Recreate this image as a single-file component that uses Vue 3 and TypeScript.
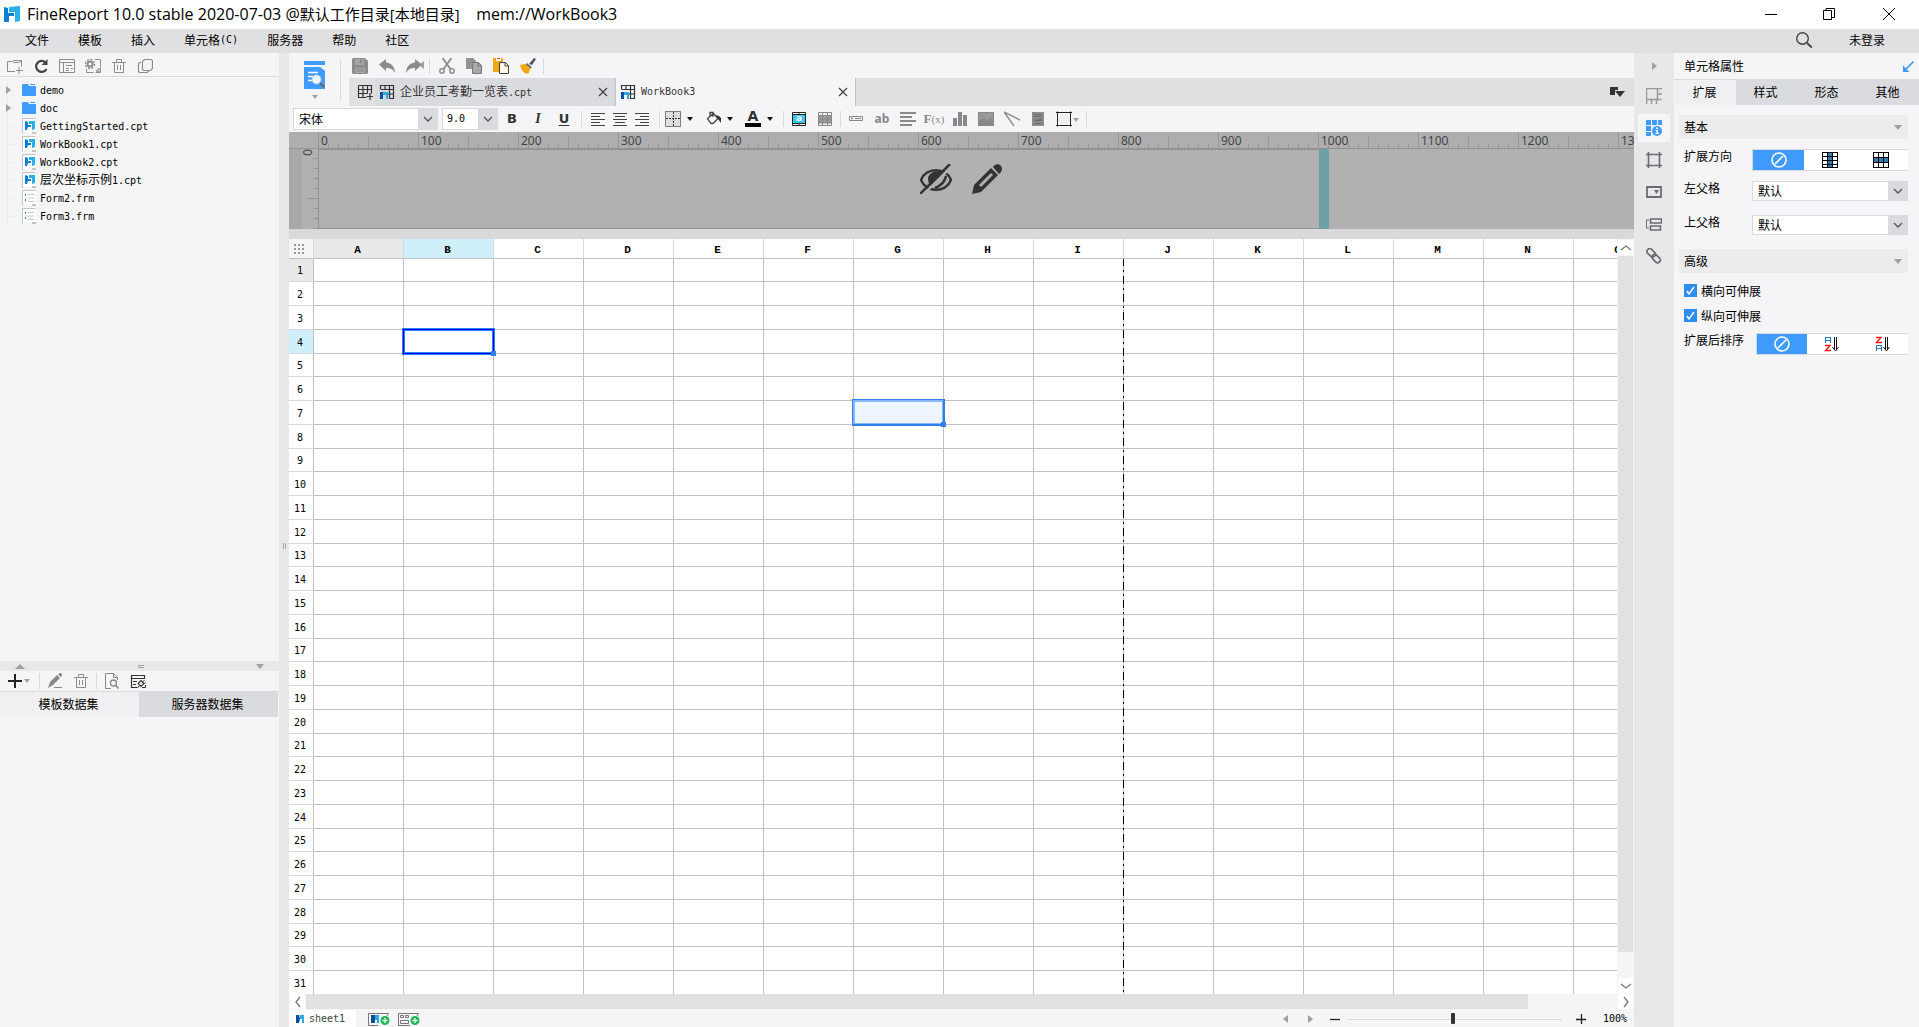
<script setup lang="ts">
import { ref } from 'vue'

const icons: Record<string, string> = {
  logo: '<path d="M0 1l4 1v5h6v3H5v6H0z" fill="#0a7fd6"/><path d="M5 1l11-1v15l-5 1V6H5z" fill="#27b1ea"/>',
  newFolder: '<path d="M8 13.500H.5v-10h5l1 1h6l2-2v6M6 2.500h8.500M12 9v7M9 12.500h7" fill="none" stroke="#8d8d8d"/>',
  refresh: '<path d="M12.500 4.500A5.500 5.500 0 1 0 13.500 11" fill="none" stroke="#444" stroke-width="2.200"/><path d="M14.500 1v6H8.500z" fill="#444"/>',
  tree: '<path d="M.5 1.500h15v13H.5zM.5 4.500h15M4.500 4.500v10M7 7.500h6M7 10.500h3M12 10.500h2M7 12.500h3" fill="none" stroke="#8d8d8d"/>',
  gearDoc: '<circle cx="5" cy="6" r="2.500" fill="none" stroke="#8d8d8d" stroke-width="2"/><circle cx="5" cy="6" r="4.500" fill="none" stroke="#8d8d8d" stroke-width="1.500" stroke-dasharray="2 1.500"/><path d="M1.500 11v3.500h7M10 1.500h5.500V9M11 13l3-3v4zM10.500 14.500h5v-5" fill="none" stroke="#8d8d8d"/>',
  trash: '<path d="M1 4.500h14M5.500 4V1.500h5V4M3.500 5v9.500h9V5M6.500 7v5M9.500 7v5" fill="none" stroke="#8d8d8d"/>',
  copy: '<path d="M7.500 1.500h7l1 1v8l-2 2h-7l-1-1v-8zM4 4.500H2.500l-1 1v8l1 1h8l1-1V13" fill="none" stroke="#8d8d8d" stroke-width="1.200"/>',
  save: '<path d="M0 1l1-1h12l3 3v12l-1 1H1l-1-1z" fill="#8c8c8c"/><path d="M3 1h9v6H3zM3 10h10v5H3z" fill="#a6a6a6"/><path d="M8 2h2v3H8zM4 11.500h8M4 13.500h8" stroke="#8c8c8c" fill="#8c8c8c"/>',
  undo: '<path d="M0 6.500L7 1v3.500c5 .5 9 4 9 10.500-2-4-5-5-9-5V13z" fill="#8c8c8c"/>',
  redo: '<path d="M16 6.500L9 1v3.500C4 5 0 8.500 0 15c2-4 5-5 9-5V13z" fill="#8c8c8c"/>',
  cut: '<path d="M3.500 0l8 11M12.500 0l-8 11" stroke="#8c8c8c" stroke-width="1.800"/><circle cx="3" cy="13" r="2.200" fill="none" stroke="#8c8c8c" stroke-width="1.500"/><circle cx="13" cy="13" r="2.200" fill="none" stroke="#8c8c8c" stroke-width="1.500"/>',
  copyFill: '<path d="M0 0h7l3 3v8H0z" fill="#939393"/><path d="M6.500 4.500h6l3 3v8h-9z" fill="#a8a8a8" stroke="#777"/><path d="M12 4.500V8h3.500" fill="none" stroke="#777"/>',
  paste: '<path d="M0 0h10v4H6v10H0z" fill="#f2a90f"/><path d="M3 0h5v3H3z" fill="#fff"/><path d="M4 0h3v1H4z" fill="#d4501e"/><path d="M6.500 4.500h6l3 3v8h-9z" fill="#fff8e6" stroke="#444"/><path d="M12 4.500V8h3.500" fill="none" stroke="#444"/>',
  brush: '<path d="M9 6l5-6 2 1-4 6z" fill="#4b5563"/><path d="M7 5l5 4-2 2-5-4z" fill="#777"/><path d="M0 7l5-1 5 4-1 5-2 1C3 15 1 11 0 7z" fill="#f2a90f"/>',
  alignLeft: '<path d="M1 2.500h14M1 5.500h9M1 8.500h14M1 11.500h9M1 14.500h14" stroke="#444"/>',
  alignCenter: '<path d="M1 2.500h14M3 5.500h10M1 8.500h14M3 11.500h10M1 14.500h14" stroke="#444"/>',
  alignRight: '<path d="M1 2.500h14M6 5.500h9M1 8.500h14M6 11.500h9M1 14.500h14" stroke="#444"/>',
  border: '<path d="M.5.5h15v15H.5z" fill="#dedede" stroke="#111" stroke-dasharray="1 1"/><path d="M8.500 1v14M1 7.500h14" stroke="#333" stroke-dasharray="2 1"/>',
  bucket: '<path d="M0 12h16v4H0z" fill="#fff"/><path d="M2.500 7.500l6-5 4.500 5-5 5h-2zM5 5V1.500h3V6" fill="none" stroke="#444" stroke-width="1.300"/><path d="M10 4l4 1 2 2v5l-3-4z" fill="#333"/>',
  fontColor: '<path d="M0 12h16v4H0z" fill="#000"/>',
  cellText: '<path d="M1 1h14v14H1z" fill="#3cc3fa"/><path d="M1 1h14v2H1zM1 13h14v2H1z" fill="#fff"/><path d="M1.500 1.500h13v13h-13zM1.500 3.500h13M1.500 12.500h13M8 1v3M8 12v3" fill="none" stroke="#222"/>',
  cellGrid: '<path d="M1 4h14v8H1z" fill="#999"/><path d="M1.500 1.500h13v13h-13zM1.500 4.500h13M1.500 8h13M1.500 12h13M5.500 1v14M10.500 1v14" fill="none" stroke="#888"/>',
  field: '<path d="M1.500 5.500h13v4h-13zM3.500 7h1v1h-1zM7 7.500h6" fill="none" stroke="#888"/>',
  lines: '<path d="M0 2h16M0 6h12M0 10h16M0 14h12" stroke="#888" stroke-width="2"/>',
  chart: '<path d="M1 7h4v8H1zM6 1h4v14H6zM11 4h4v11h-4z" fill="#888"/>',
  image: '<path d="M0 1h16v14H0z" fill="#888"/><path d="M1 2h14v7l-3-2-3 3-3-3-5 3z" fill="#999"/>',
  slash: '<path d="M0 1l16 8M0 1l10 14" stroke="#8c8c8c" stroke-width="1.400"/>',
  subreport: '<path d="M2 1h12v14H2z" fill="#8c8c8c"/><path d="M4 3.500h8M4 5.500h8M4 12.500h8" stroke="#6c6c6c"/><path d="M4 10l2-2 2 1 3-2 1 3z" fill="#6c6c6c"/>',
  frame: '<path d="M1.500.5v15M14.500.5v15M0 1.500h16M0 14.500h16" fill="none" stroke="#222"/><path d="M3 3h10v10H3z" fill="#efefef"/>',
  tabNew: '<path d="M1.500 1.500h13v8M1.500 1.500v12h8M1.500 5.500h13M6 1.500v12M10.500 1.500v8M1.500 9.500h9M13 9v7M9.500 12.500H16" fill="none" stroke="#333" stroke-width="1.200"/>',
  tabFile: '<path d="M1.500 5V1.500h13v13H10M1.500 5.500h13M6 1.500v4M10.500 1.500v13M9 10h5" fill="none" stroke="#333" stroke-width="1.200"/><path d="M1 8h3v7H1z" fill="#0a4f9e"/><path d="M4 8h5v7H7v-4H4z" fill="#29abe2"/>',
  close: '<path d="M4 4l8 8M12 4l-8 8" stroke="#444" stroke-width="1.300"/>',
  down: '<path d="M4 6l4 4 4-4" fill="none" stroke="#555" stroke-width="1.300"/>',
  left: '<path d="M10 3L6 8l4 5" fill="none" stroke="#777" stroke-width="1.300"/>',
  right: '<path d="M6 3l4 5-4 5" fill="none" stroke="#777" stroke-width="1.300"/>',
  up: '<path d="M3 10l5-4 5 4" fill="none" stroke="#777" stroke-width="1.300"/>',
  downWide: '<path d="M3 6l5 4 5-4" fill="none" stroke="#777" stroke-width="1.300"/>',
  tabList: '<path d="M1 3h8v3H6v5H1z" fill="#333"/><path d="M6 7h10l-5 6z" fill="#333"/>',
  stripTemplate: '<path d="M.5 16V.5H16M.5 11.500h15M11.500 0v11M11.500 6h4.500M5.500 11.500V16M10.500 11.500V16" fill="none" stroke="#999" stroke-width="1.500"/>',
  stripCell: '<path d="M0 0h5v5H0zM6 0h5v5H6zM12 0h4v5h-4zM0 6h5v5H0zM0 12h5v4H0z" fill="#409bff"/><circle cx="11" cy="11" r="5.500" fill="#f5f5f7"/><circle cx="11" cy="11" r="5" fill="#409bff"/><path d="M10 7.500h2v1.500h-2zM9.500 10h2.500v3h1v1H9.500v-1h1v-2h-1z" fill="#fff"/>',
  stripFrame: '<path d="M2.500 0v16M13.500 0v16M0 2.500h16M0 13.500h16" stroke="#6b6b75" stroke-width="1.600"/>',
  stripWidget: '<path d="M1 3h14v10H1z" fill="none" stroke="#6b6b75" stroke-width="1.800"/><path d="M8 6h5l-2.500 4z" fill="#6b6b75"/>',
  stripCondition: '<path d="M4.500 3h11v4h-11zM4.500 10h10v4h-10z" fill="none" stroke="#6b6b75" stroke-width="1.600"/><path d="M3 4H.5v8H3" fill="none" stroke="#6b6b75"/>',
  stripLink: '<g transform="rotate(45 8 8)" fill="none" stroke="#6b6b75" stroke-width="1.700"><rect x="-1" y="5" width="9.500" height="5.500" rx="2.700"/><rect x="6.500" y="5.500" width="9.500" height="5.500" rx="2.700"/></g>',
  none: '<circle cx="8" cy="8" r="7" fill="none" stroke="#fff" stroke-width="1.600"/><path d="M4 12l8-8" stroke="#fff" stroke-width="1.600"/>',
  expandV: '<path d="M0 0h16v16H0z" fill="#000"/><path d="M1 1h4v3H1zM1 5h4v3H1zM1 9h4v3H1zM1 13h4v2H1zM11 1h4v3h-4zM11 5h4v3h-4zM11 9h4v3h-4zM11 13h4v2h-4z" fill="#fff"/><path d="M6 1h4v3H6zM6 5h4v3H6zM6 9h4v3H6zM6 13h4v2H6z" fill="#2f7cb0"/>',
  expandH: '<path d="M0 0h16v16H0z" fill="#000"/><path d="M1 1h4v4H1zM6 1h4v4H6zM11 1h4v4h-4zM1 11h4v4H1zM6 11h4v4H6zM11 11h4v4h-4z" fill="#fff"/><path d="M1 6h4v4H1zM6 6h4v4H6zM11 6h4v4h-4z" fill="#2f7cb0"/>',
  sortAsc: '<path d="M1.500 7V1.500h5V7M1.500 4.500h5" fill="none" stroke="#2f7cb0" stroke-width="1.200"/><path d="M1 9.500h5L1.500 14.500h5.500" fill="none" stroke="#f01414" stroke-width="1.300"/><path d="M10.500 1v12M12.500 1v12M8.500 11l3 4 3-4" fill="none" stroke="#111"/>',
  sortDesc: '<path d="M1.500 15V9.500h5V15M1.500 12.500h5" fill="none" stroke="#2f7cb0" stroke-width="1.200"/><path d="M1 1.500h5L1.500 6.500h5.500" fill="none" stroke="#f01414" stroke-width="1.300"/><path d="M10.500 1v12M12.500 1v12M8.500 11l3 4 3-4" fill="none" stroke="#111"/>',
  plus: '<path d="M8 1v14M1 8h14" stroke="#222" stroke-width="2"/>',
  pencil: '<path d="M1 15l2-6 7-7 3 3-7 7z" fill="#888"/><path d="M7 14.500h8" stroke="#888"/><path d="M11 1l3-1 1 2-1 2z" fill="#777"/>',
  previewData: '<path d="M7 15.500H1.500V.5h8l4 4V7M9.500.5v4h4" fill="none" stroke="#888"/><circle cx="9.500" cy="10" r="3" fill="none" stroke="#888" stroke-width="1.300"/><path d="M11.500 12l3 3.500" stroke="#888" stroke-width="1.500"/>',
  dataConn: '<path d="M7 14.500H1.500v-12h13V6M1 5.500h14M3 8.500h4M3 11.500h3" fill="none" stroke="#333" stroke-width="1.200"/><rect x="9" y="8.500" width="4" height="4" transform="rotate(45 11 10.500)" fill="none" stroke="#333" stroke-width="1.200"/><path d="M12.500 9l2-2M14 11l1.500-1.500M7.500 15l2-2.500M12 14.500h3.500V12" fill="none" stroke="#333"/>',
  addSheet: '<path d="M10 13.500H.5v-12h20" fill="none" stroke="#777"/><path d="M20.500 1.500L19 4" stroke="#777"/><path d="M3 3h4v8H3z" fill="#0a4f9e"/><path d="M7 3h4v8H9V8H7z" fill="#29abe2"/><circle cx="17" cy="8.500" r="4.500" fill="#19b955"/><path d="M17 6v5M14.500 8.500h5" stroke="#fff" stroke-width="1.300"/>',
  addForm: '<path d="M12 13.500H.5v-12h20" fill="none" stroke="#777"/><path d="M20.500 1.500L19 4" stroke="#777"/><path d="M2.500 3.500h3v2h-3zM7.500 3.500h3v2h-3zM2.500 8.500h8v3h-8z" fill="none" stroke="#777"/><circle cx="17" cy="8.500" r="4.500" fill="#19b955"/><path d="M17 6v5M14.500 8.500h5" stroke="#fff" stroke-width="1.300"/>',
}

interface TreeNode { kind: 'folder' | 'cpt' | 'frm'; cjk?: string; name: string }
const tree: TreeNode[] = [
  { kind: 'folder', name: 'demo' },
  { kind: 'folder', name: 'doc' },
  { kind: 'cpt', name: 'GettingStarted.cpt' },
  { kind: 'cpt', name: 'WorkBook1.cpt' },
  { kind: 'cpt', name: 'WorkBook2.cpt' },
  { kind: 'cpt', cjk: '层次坐标示例', name: '1.cpt' },
  { kind: 'frm', name: 'Form2.frm' },
  { kind: 'frm', name: 'Form3.frm' },
]
const menus = [
  { label: '文件' }, { label: '模板' }, { label: '插入' }, { label: '单元格', key: '(C)' },
  { label: '服务器' }, { label: '帮助' }, { label: '社区' },
]
const treeTools = ['newFolder', 'refresh', 'tree', 'gearDoc', 'trash', 'copy']
const historyTools = ['save', 'undo', 'redo']
const clipTools = ['cut', 'copyFill', 'paste', 'brush']
const strip = ['stripTemplate', 'stripCell', 'stripFrame', 'stripWidget', 'stripCondition', 'stripLink']
const panelTabs = ['扩展', '样式', '形态', '其他']
const columns = 'ABCDEFGHIJKLMNO'.split('')
const rows = Array.from({ length: 31 }, (_, i) => i + 1)
const ruler = Array.from({ length: 14 }, (_, i) => i * 100)
const zoom = ref(49)
const horizontal = ref(true)
const vertical = ref(true)
</script>

<template>
  <div class="app">
    <header class="title">
      <svg class="i" viewBox="0 0 16 16" v-html="icons.logo" />
      <h1>FineReport 10.0 stable 2020-07-03 @<span>默认工作目录[本地目录]</span>&nbsp;&nbsp;&nbsp; mem://WorkBook3</h1>
      <div class="window-buttons">
        <button aria-label="minimize"><svg viewBox="0 0 12 12"><path d="M0 6.500h12" stroke="#000" /></svg></button>
        <button aria-label="restore"><svg viewBox="0 0 12 12"><path d="M.5 2.500h8v9h-8zM3 2V.5h8.500v9H9" fill="none" stroke="#000" /></svg></button>
        <button aria-label="close"><svg viewBox="0 0 12 12"><path d="M0 0l12 12M12 0L0 12" stroke="#000" /></svg></button>
      </div>
    </header>
    <nav class="menu">
      <button v-for="m in menus" :key="m.label">{{ m.label }}<span v-if="m.key" class="mono">{{ m.key }}</span></button>
      <div class="account">
        <svg class="i" viewBox="0 0 16 16"><circle cx="6.500" cy="6.500" r="5.800" fill="none" stroke="#444" stroke-width="1.400" /><path d="M11 11l5 4.500" stroke="#444" stroke-width="2" /></svg>
        <button>未登录</button>
      </div>
    </nav>

    <div class="body">
      <aside class="left">
        <div class="tree-tools">
          <button v-for="t in treeTools" :key="t" class="tool" :aria-label="t"><svg class="i" viewBox="0 0 16 16" v-html="icons[t]" /></button>
        </div>
        <ul class="tree">
          <li v-for="n in tree" :key="n.name">
            <span class="twig"><i v-if="n.kind === 'folder'" class="tri right" /></span>
            <svg v-if="n.kind === 'folder'" class="i" viewBox="0 0 16 16"><path d="M1 3l1-1h5l1 2h7v10H1z" fill="#409bff" /><path d="M9 2.500h5" stroke="#409bff" /></svg>
            <svg v-else class="i" viewBox="0 0 16 16">
              <path d="M2 1h13v14H2z" fill="#fff" /><path d="M1.500 16V.5h13" fill="none" stroke="#c4c4c4" /><path d="M11 14h4v2h-4z" fill="#c4c4c4" />
              <template v-if="n.kind === 'cpt'"><path d="M4 3l3 1v3h3v2H7l-1 3H4z" fill="#0a7fd6" /><path d="M8 3h6v8l-3 1V6H8z" fill="#27b1ea" /></template>
              <template v-else><path d="M4.500 4v2M4.500 9v2" stroke="#2f8bd0" /><path d="M6.500 4.500h7M6.500 11.500h7M6.500 8h7" fill="none" stroke="#c8c8c8" /></template>
            </svg>
            <span>{{ n.cjk }}<span class="mono">{{ n.name }}</span></span>
          </li>
        </ul>
        <div class="hsplit"><i class="tri up" /><i class="grip" /><i class="tri down big" /></div>
        <div class="data-tools">
          <button class="tool add" aria-label="add"><svg class="i" viewBox="0 0 16 16" v-html="icons.plus" /><i class="tri down" /></button>
          <i class="sep" />
          <button class="tool" aria-label="edit"><svg class="i" viewBox="0 0 16 16" v-html="icons.pencil" /></button>
          <button class="tool" aria-label="delete"><svg class="i" viewBox="0 0 16 16" v-html="icons.trash" /></button>
          <i class="sep" />
          <button class="tool" aria-label="preview data"><svg class="i" viewBox="0 0 16 16" v-html="icons.previewData" /></button>
          <button class="tool" aria-label="connection"><svg class="i" viewBox="0 0 16 16" v-html="icons.dataConn" /></button>
        </div>
        <div class="data-tabs"><button class="on">模板数据集</button><button>服务器数据集</button></div>
        <div class="data-list" />
      </aside>
      <div class="vsplit"><i class="tri left" /><i class="vgrip" /></div>

      <main class="center">
        <div class="top">
          <button class="preview" aria-label="preview">
            <svg viewBox="0 0 22 28"><path d="M0 0h21v4H0zM0 6h16l5 4v18H0z" fill="#409bff" /><path d="M4 11.500h10M4 15.500h5M4 19.500h4" stroke="#fff" stroke-width="1.500" /><circle cx="12.500" cy="18.500" r="4.500" fill="#eef5fb" stroke="#bcd" /><path d="M16 22l4 4" stroke="#666" stroke-width="2" /></svg>
            <i class="tri down" />
          </button>
          <i class="sep tall" />
          <div class="top-right">
            <div class="history">
              <button v-for="t in historyTools" :key="t" class="tool" :aria-label="t"><svg class="i" viewBox="0 0 16 16" v-html="icons[t]" /></button>
              <i class="sep" />
              <button v-for="t in clipTools" :key="t" class="tool" :aria-label="t"><svg class="i" viewBox="0 0 16 16" v-html="icons[t]" /></button>
              <i class="sep" />
            </div>
            <div class="tabs">
              <button class="new-tab" aria-label="new"><svg class="i" viewBox="0 0 16 16" v-html="icons.tabNew" /></button>
              <div class="tab">
                <svg class="i" viewBox="0 0 16 16" v-html="icons.tabFile" />
                <span>企业员工考勤一览表<span class="mono">.cpt</span></span>
                <button aria-label="close tab"><svg class="i" viewBox="0 0 16 16" v-html="icons.close" /></button>
              </div>
              <div class="tab on">
                <svg class="i" viewBox="0 0 16 16" v-html="icons.tabFile" />
                <span class="mono">WorkBook3</span>
                <button aria-label="close tab"><svg class="i" viewBox="0 0 16 16" v-html="icons.close" /></button>
              </div>
              <button class="tab-list" aria-label="tab list"><svg class="i" viewBox="0 0 16 16" v-html="icons.tabList" /></button>
            </div>
          </div>
        </div>

        <div class="format">
          <div class="combo font"><select aria-label="font"><option>宋体</option></select><span><svg class="i" viewBox="0 0 16 16" v-html="icons.down" /></span></div>
          <div class="combo size"><select aria-label="size" class="mono"><option>9.0</option></select><span><svg class="i" viewBox="0 0 16 16" v-html="icons.down" /></span></div>
          <div class="group style">
            <button class="tool b">B</button><button class="tool it">I</button><button class="tool u">U</button>
          </div>
          <i class="sep" />
          <div class="group align">
            <button v-for="a in ['alignLeft', 'alignCenter', 'alignRight']" :key="a" class="tool" :aria-label="a"><svg class="i" viewBox="0 0 16 16" v-html="icons[a]" /></button>
          </div>
          <i class="sep" />
          <div class="group drops">
            <button aria-label="border"><svg class="i" viewBox="0 0 16 16" v-html="icons.border" /><i class="tri down dark" /></button>
            <button aria-label="fill"><svg class="i" viewBox="0 0 16 16" v-html="icons.bucket" /><i class="tri down dark" /></button>
            <button aria-label="text colour"><span class="fc"><svg class="i" viewBox="0 0 16 16" v-html="icons.fontColor" /><b>A</b></span><i class="tri down dark" /></button>
          </div>
          <i class="sep" />
          <div class="group cells">
            <button class="tool cell-a" aria-label="merge"><svg class="i" viewBox="0 0 16 16" v-html="icons.cellText" /><b>a</b></button>
            <button class="tool" aria-label="unmerge"><svg class="i" viewBox="0 0 16 16" v-html="icons.cellGrid" /></button>
          </div>
          <i class="sep" />
          <div class="group cells">
            <button class="tool" aria-label="field"><svg class="i" viewBox="0 0 16 16" v-html="icons.field" /></button>
            <button class="tool ab">ab</button>
            <button class="tool" aria-label="rich text"><svg class="i" viewBox="0 0 16 16" v-html="icons.lines" /></button>
            <button class="tool fx">F<small>(x)</small></button>
            <button v-for="t in ['chart', 'image', 'slash', 'subreport']" :key="t" class="tool" :aria-label="t"><svg class="i" viewBox="0 0 16 16" v-html="icons[t]" /></button>
            <button class="tool frame" aria-label="frame"><svg class="i" viewBox="0 0 16 16" v-html="icons.frame" /><i class="tri down" /></button>
          </div>
          <i class="sep last" />
        </div>

        <div class="ruler"><div v-for="n in ruler" :key="n" class="mark">{{ n }}</div></div>
        <div class="pane">
          <div class="vruler"><span>0</span></div>
          <div class="page" />
          <div class="page-edge" />
          <div class="pane-icons">
            <svg viewBox="0 0 32 30"><path d="M1 16C6 3 26 3 31 16 26 29 6 29 1 16z" fill="none" stroke="#333" stroke-width="2.500" /><path d="M8 14c2-8 14-8 17-4L12 23c-3-2-4-5-4-9z" fill="#333" /><path d="M26 12c-1 6-6 10-11 12" fill="none" stroke="#333" stroke-width="2.500" /><path d="M3 31L32 2" stroke="#b1b1b1" stroke-width="2.500" /><path d="M0 30L30 0" stroke="#333" stroke-width="2.500" /></svg>
            <svg viewBox="0 0 30 30"><path d="M0 30l2-9L19 4l7 7L9 28z" fill="#333" /><path d="M7 21L19 9l2 2L9 23z" fill="#b1b1b1" /><path d="M21 3c2-4 9-4 9 2 0 2-1 3-3 5z" fill="#333" /></svg>
          </div>
        </div>

        <div class="sheet">
          <div class="sheet-view">
            <table>
              <colgroup><col class="c-head"><col v-for="c in columns" :key="c"></colgroup>
              <thead>
                <tr>
                  <th class="corner"><svg viewBox="0 0 12 12"><path d="M0 1h2M4 1h2M8 1h2M0 5h2M4 5h2M8 5h2M0 9h2M4 9h2M8 9h2" stroke="#999" stroke-width="2" /></svg></th>
                  <th v-for="c in columns" :key="c" :class="{ edge: c === 'A', picked: c === 'B' }">{{ c }}</th>
                </tr>
              </thead>
              <tbody>
                <tr v-for="r in rows" :key="r">
                  <th :class="{ edge: r === 1, picked: r === 4 }">{{ r }}</th>
                  <td v-for="c in columns" :key="c">
                    <div v-if="r === 4 && c === 'B'" class="sel active"><i /></div>
                    <div v-if="r === 7 && c === 'G'" class="sel hover"><i /></div>
                    <div v-if="c === 'I' && r === 1" class="page-break" />
                  </td>
                </tr>
              </tbody>
            </table>
          </div>
          <div class="vbar">
            <button aria-label="scroll up"><svg class="i" viewBox="0 0 16 16" v-html="icons.up" /></button>
            <div class="vthumb" />
            <button aria-label="scroll down"><svg class="i" viewBox="0 0 16 16" v-html="icons.downWide" /></button>
          </div>
        </div>
        <div class="hbar">
          <button aria-label="scroll left"><svg class="i" viewBox="0 0 16 16" v-html="icons.left" /></button>
          <div class="hthumb" />
          <button aria-label="scroll right"><svg class="i" viewBox="0 0 16 16" v-html="icons.right" /></button>
        </div>
        <footer>
          <button class="sheet-tab"><svg viewBox="0 0 8 8"><path d="M0 0h3l1 4-1 4H0z" fill="#0a4f9e" /><path d="M4 0h4v8H6V4H4z" fill="#29abe2" /></svg><span class="mono">sheet1</span></button>
          <button class="add-sheet" aria-label="add sheet"><svg viewBox="0 0 22 14" v-html="icons.addSheet" /></button>
          <button class="add-sheet" aria-label="add form"><svg viewBox="0 0 22 14" v-html="icons.addForm" /></button>
          <div class="zoom">
            <i class="tri left" /><i class="tri right" />
            <button aria-label="zoom out"><svg viewBox="0 0 10 10"><path d="M0 5.500h10" stroke="#222" stroke-width="1.300" /></svg></button>
            <input v-model="zoom" type="range" min="0" max="100" aria-label="zoom">
            <button aria-label="zoom in"><svg viewBox="0 0 10 10"><path d="M0 5.500h10M5.500 0v10" stroke="#222" stroke-width="1.300" /></svg></button>
            <span class="mono">100%</span>
          </div>
        </footer>
      </main>

      <nav class="strip">
        <div class="strip-top"><i class="tri right" /></div>
        <button v-for="s in strip" :key="s" :class="{ on: s === 'stripCell' }" :aria-label="s"><svg class="i" viewBox="0 0 16 16" v-html="icons[s]" /></button>
      </nav>

      <aside class="props">
        <div class="props-title"><h2>单元格属性</h2><svg viewBox="0 0 12 12"><path d="M11.500.5L3 9" stroke="#409bff" stroke-width="1.800" /><path d="M0 5v7h7z" fill="#409bff" /></svg></div>
        <div class="props-tabs"><button v-for="(t, i) in panelTabs" :key="t" :class="{ on: i === 0 }">{{ t }}</button></div>
        <section>
          <h3>基本<i class="tri down big" /></h3>
          <div class="row"><span>扩展方向</span>
            <div class="seg">
              <button class="on" aria-label="none"><svg class="i" viewBox="0 0 16 16" v-html="icons.none" /></button>
              <button aria-label="vertical"><svg class="i" viewBox="0 0 16 16" v-html="icons.expandV" /></button>
              <button aria-label="horizontal"><svg class="i" viewBox="0 0 16 16" v-html="icons.expandH" /></button>
            </div>
          </div>
          <div class="row parent"><label for="left-parent">左父格</label>
            <div class="combo"><select id="left-parent"><option>默认</option></select><span><svg class="i" viewBox="0 0 16 16" v-html="icons.down" /></span></div>
          </div>
          <div class="row parent"><label for="up-parent">上父格</label>
            <div class="combo"><select id="up-parent"><option>默认</option></select><span><svg class="i" viewBox="0 0 16 16" v-html="icons.down" /></span></div>
          </div>
        </section>
        <section>
          <h3>高级<i class="tri down big" /></h3>
          <label class="check"><input v-model="horizontal" type="checkbox"><svg viewBox="0 0 13 13"><path d="M3 7l2 3 5-7" fill="none" stroke="#fff" stroke-width="1.500" /></svg>横向可伸展</label>
          <label class="check"><input v-model="vertical" type="checkbox"><svg viewBox="0 0 13 13"><path d="M3 7l2 3 5-7" fill="none" stroke="#fff" stroke-width="1.500" /></svg>纵向可伸展</label>
          <div class="row sort"><span>扩展后排序</span>
            <div class="seg">
              <button class="on" aria-label="none"><svg class="i" viewBox="0 0 16 16" v-html="icons.none" /></button>
              <button aria-label="ascending"><svg class="i" viewBox="0 0 16 16" v-html="icons.sortAsc" /></button>
              <button aria-label="descending"><svg class="i" viewBox="0 0 16 16" v-html="icons.sortDesc" /></button>
            </div>
          </div>
        </section>
      </aside>
    </div>
  </div>
</template>

<style>
body { margin: 0; }
</style>

<style scoped>
.app { display: flex; flex-direction: column; height: 100vh; overflow: hidden; background: #f5f5f7; color: #000; font: 12px/16px "Noto Sans CJK SC", sans-serif; }
.app * { box-sizing: border-box; }
button { display: flex; align-items: center; justify-content: center; padding: 0; border: 0; background: none; color: inherit; font: inherit; white-space: nowrap; }
svg { display: block; flex: none; }
h1, h2, h3, ul { margin: 0; padding: 0; font-weight: normal; }
.i { width: 16px; height: 16px; }
.mono { font-family: "DejaVu Sans Mono", monospace; font-size: 10px; }
.sep { flex: none; width: 1px; height: 16px; background: #d9d9db; }
.tri { flex: none; width: 0; height: 0; border: 4px solid transparent; }
.tri.right { border-left: 5px solid #a0a0a0; border-right: 0; }
.tri.left { border-right: 5px solid #a0a0a0; border-left: 0; }
.tri.up { border-width: 0 5px 5px; border-bottom-color: #a0a0a0; }
.tri.down { border-width: 4px 3px 0; border-top-color: #a0a0a0; }
.tri.big { border-width: 5px 4px 0; }
.tri.dark { border-top-color: #111; }

.title { display: flex; align-items: center; height: 29px; padding: 0 0 2px 4px; background: #fff; }
.title h1 { margin-left: 7px; font: 16px/26px "Open Sans", "Noto Sans CJK SC", sans-serif; white-space: pre; }
.title span { font-size: 15px; }
.window-buttons { display: flex; margin-left: auto; }
.window-buttons button { width: 58px; height: 28px; }
.window-buttons button:last-child { width: 61px; }
.window-buttons svg { width: 12px; height: 12px; }
.menu { display: flex; gap: 29px; align-items: center; height: 24px; padding: 0 0 2px 25px; background: #e0e0e2; }
.account { display: flex; gap: 37px; align-items: center; margin-left: auto; padding-right: 34px; }
.body { display: flex; flex: 1; min-height: 0; }

.left { display: flex; flex-direction: column; width: 279px; }
.tree-tools { display: flex; align-items: center; height: 24px; padding: 2px 0 0 2px; border-bottom: 1px solid #d9d9db; }
.tool { position: relative; flex: none; width: 26px; height: 22px; }
.tree { flex: 1; padding-top: 4px; list-style: none; }
.tree li { display: flex; align-items: center; height: 18px; }
.tree li > .i { margin-right: 3px; }
.twig { display: flex; align-items: center; width: 21px; height: 18px; padding-left: 6px; background: linear-gradient(#ececee, #ececee) 7px 0 / 1px 100% no-repeat, linear-gradient(#ececee, #ececee) 7px 9px / 7px 1px no-repeat; }
.hsplit { display: flex; align-items: center; justify-content: space-between; height: 10px; padding: 0 15px; background: #e8e8e8; }
.grip { width: 6px; height: 3px; border: solid #a0a0a0; border-width: 1px 0; }
.data-tools { display: flex; align-items: center; height: 21px; border-bottom: 1px solid #d9d9db; }
.data-tools .add { width: 37px; gap: 1px; }
.data-tools .sep { margin: 0 2px; }
.data-tabs { display: flex; height: 25px; padding-right: 1px; }
.data-tabs button { flex: 1; padding: 0 2px 2px 0; background: #dadbde; }
.data-tabs .on { background: #f0f0f2; }
.data-list { height: 310px; }
.vsplit { display: flex; flex-direction: column; align-items: center; width: 10px; padding-top: 8px; background: #e8e8e8; }
.vgrip { width: 3px; height: 6px; margin-top: 474px; border: solid #aaa; border-width: 0 1px; }

.center { display: flex; flex: 1; flex-direction: column; min-width: 0; }
.top { display: flex; height: 53px; }
.preview { flex-direction: column; gap: 6px; width: 51px; }
.preview svg { width: 22px; height: 28px; }
.sep.tall { height: 42px; margin: 6px 8px 0 0; }
.top-right { display: flex; flex: 1; flex-direction: column; min-width: 0; }
.history { display: flex; align-items: center; height: 25px; }
.history .tool { width: 27px; }
.history .tool:first-child { margin-left: -3px; }
.history .sep { margin: 0 3px 0 2px; }
.tabs { display: flex; height: 28px; background: #e0e0e2; }
.new-tab { width: 26px; padding-left: 6px; }
.tab { display: flex; align-items: center; width: 241px; padding: 0 4px; border-right: 1px solid #c4c4c6; background: #dadbde; color: #333; }
.tab > .i { margin-right: 5px; }
.tab button { margin-left: auto; }
.tab.on { width: 240px; background: #f5f5f7; }
.tab-list { width: 24px; margin-left: auto; padding-right: 10px; }
.format { display: flex; align-items: center; height: 26px; padding-left: 4px; }
.combo { display: flex; height: 22px; border: 1px solid #d9d9dd; background: #fff; }
.combo select { flex: 1; min-width: 0; height: 20px; padding: 0 0 0 5px; border: 0; background: none; color: #000; font: 12px/20px "Noto Sans CJK SC", sans-serif; appearance: none; }
.combo select.mono { padding-left: 4px; font: 10px/20px "DejaVu Sans Mono", monospace; }
.combo span { display: flex; align-items: center; justify-content: center; width: 19px; background: #dadbde; }
.font { width: 145px; }
.size { width: 56px; margin-left: 4px; }
.group { display: flex; align-items: center; }
.style { margin: 0 4px 0 1px; color: #333; font: bold 13px/16px "DejaVu Sans", sans-serif; }
.it { font: italic bold 14px/16px "Liberation Serif", serif; }
.u { text-decoration: underline; text-underline-offset: 2px; }
.align { margin: 0 6px 0 5px; }
.align .tool { width: 22px; }
.drops { gap: 12px; margin: 0 10px 0 5px; }
.drops button { gap: 6px; }
.fc { position: relative; }
.fc b { position: absolute; inset: -3px 0 auto; color: #333; font: bold 14px/16px "DejaVu Sans", sans-serif; text-align: center; }
.cell-a b { position: absolute; inset: 3px 0 auto; color: #fff; font: bold 9px/14px "DejaVu Sans", sans-serif; text-align: center; }
.cells { margin: 0 2px; }
.ab { color: #888; font: bold 12px/16px "Noto Sans", sans-serif; }
.fx { color: #888; font: bold 13px/16px "Liberation Serif", serif; }
.fx small { font-size: 11px; font-weight: normal; }
.frame .tri { position: absolute; right: -2px; top: 10px; }
.last { margin-left: 7px; }

.ruler { display: flex; height: 17px; padding-left: 29px; overflow-x: clip; border-bottom: 1px solid #929292; background: #aeaeae; }
.mark { flex: none; width: 100px; padding-left: 3px; color: #444; font: 12px/17px "Noto Sans", sans-serif; background: linear-gradient(#969696, #969696) 0 0 / 1px 16px no-repeat, linear-gradient(#969696, #969696) 50px 5px / 1px 11px no-repeat, repeating-linear-gradient(90deg, #969696 0 1px, transparent 1px 10px) 0 11px / 100px 5px no-repeat; }
.pane { position: relative; display: flex; height: 80px; background: #b1b1b1; }
.vruler { width: 30px; padding: 0 4px 0 13px; border-right: 1px solid #929292; background: repeating-linear-gradient(transparent 0 9px, #969696 9px 10px) 24px 0 / 5px 80px no-repeat, linear-gradient(#969696, #969696) 18px 49px / 11px 1px no-repeat, linear-gradient(#a9a9a9, #a9a9a9) 0 0 / 13px 100% no-repeat; }
.vruler span { display: block; width: 10px; height: 10px; color: #444; font: 12px/10px "Noto Sans", sans-serif; writing-mode: vertical-rl; }
.page { width: 1000px; border: solid #929292; border-width: 1px 0; }
.page-edge { width: 10px; background: #6f9fa9; }
.pane-icons { position: absolute; inset: 15px 0 auto; display: flex; gap: 19px; justify-content: center; }
.pane-icons svg { width: 32px; height: 30px; }
.sheet { display: flex; flex: 1; min-height: 0; border-top: 10px solid #d9d9db; }
.sheet-view { flex: 1; min-width: 0; overflow: hidden; background: #fff; }
table { width: 1375px; table-layout: fixed; border-collapse: separate; border-spacing: 0; font: 10px/12px "DejaVu Sans Mono", monospace; }
col { width: 90px; }
.c-head { width: 25px; }
th, td { height: 24px; padding: 0; border: solid #c0c0c0; border-width: 0 1px 1px 0; }
th { padding: 2px 2px 0 0; font-weight: normal; }
thead th { height: 20px; border-right-color: #d9d9db; font: bold 11px/16px "Liberation Mono", monospace; }
tbody th { border-bottom-color: #d9d9db; }
tbody tr:nth-child(4n + 1) > * { height: 23px; }
td { position: relative; }
.corner { background: #f5f5f7; }
.corner svg { width: 12px; height: 12px; margin: 0 auto; }
.edge { background: #e8e8e8; }
.picked { background: #cff0fb; }
.sel { position: absolute; z-index: 1; inset: -2px; }
.sel i { position: absolute; right: -2px; bottom: -2px; width: 5px; height: 5px; background: #2f80ed; }
.active { border: 1px solid #2f80ed; box-shadow: inset 0 0 0 1px #00f, inset 0 0 0 2px #2f80ed; }
.hover { border: solid #2f80ed; border-width: 1px 2px 2px 1px; background: #eef5fe; box-shadow: inset 0 0 0 1px #85b7f8, inset 1px 1px 0 1px #85b7f8; }
.hover i { right: -3px; bottom: -3px; }
.page-break { position: absolute; z-index: 1; top: 0; right: -1px; width: 1px; height: 2000px; background: repeating-linear-gradient(#000 0 7px, #c0c0c0 7px 11px, #000 11px 13px, #c0c0c0 13px 17px, #000 17px 18px); }
.vbar { display: flex; flex-direction: column; width: 17px; padding: 1px; }
.vbar button, .hbar button { flex: none; width: 15px; height: 15px; background: #fff; }
.vthumb { flex: 1; margin: 1px 0 26px; background: #e1e1e1; }
.hbar { display: flex; gap: 1px; height: 16px; padding: 0 1px; }
.hthumb { flex: 1; height: 15px; margin-right: 89px; background: #e1e1e1; }
footer { display: flex; align-items: center; height: 17px; }
.sheet-tab { gap: 5px; width: 67px; height: 17px; padding-right: 4px; background: #fff; color: #444; }
.sheet-tab svg { width: 8px; height: 8px; }
.add-sheet { width: 30px; }
.add-sheet svg { width: 22px; height: 14px; }
.sheet-tab + .add-sheet { margin-left: 8px; }
.zoom { display: flex; align-items: center; margin-left: auto; padding-right: 7px; }
.zoom .tri + .tri { margin: 0 17px 0 20px; }
.zoom svg { width: 10px; height: 10px; }
.zoom input { width: 214px; height: 14px; margin: 0 14px 0 8px; appearance: none; background: linear-gradient(#d9d9db, #d9d9db) 0 7px / 100% 1px no-repeat; }
.zoom input::-webkit-slider-thumb { width: 4px; height: 11px; appearance: none; border-radius: 1px; background: #333; }
.zoom .mono { margin-left: 17px; }

.strip { display: flex; flex-direction: column; align-items: center; gap: 4px; width: 40px; background: #e8e8e8; }
.strip-top { display: flex; align-items: center; height: 25px; }
.strip button { width: 32px; height: 28px; }
.strip .on { background: #f5f5f7; }
.props { width: 245px; }
.props-title { display: flex; align-items: center; justify-content: space-between; height: 27px; padding: 0 5px 0 10px; border-bottom: 1px solid #d9d9db; }
.props-title h2 { font-size: 12px; }
.props-title svg { width: 11px; height: 11px; }
.props-tabs { display: flex; height: 25px; padding-left: 1px; }
.props-tabs button { flex: 1; padding: 0 2px 2px 0; background: #dadbde; }
.props-tabs .on { background: #f0f0f2; }
section { margin: 10px 11px 0 5px; }
section h3 { display: flex; align-items: center; justify-content: space-between; height: 24px; padding: 0 6px 0 5px; background: #ececec; font-size: 12px; }
.row { display: flex; justify-content: space-between; margin-top: 10px; padding-left: 5px; line-height: 14px; }
.row .combo { width: 156px; height: 20px; }
.row .combo select { height: 18px; line-height: 18px; }
.row.parent + .row.parent { margin: 14px 0; }
.seg { display: flex; width: 156px; height: 22px; padding-right: 2px; border: 1px solid #d9d9dd; border-right: 0; background: #fff; }
.seg button { flex: 1; }
.seg .on { background: #409bff; }
.check { position: relative; display: flex; gap: 4px; align-items: center; height: 13px; margin: 11px 0 0 5px; }
.check + .check { margin-top: 12px; }
.check input { width: 13px; height: 13px; margin: 0; appearance: none; background: #2f8df0; }
.check svg { position: absolute; left: 0; top: 0; width: 13px; height: 13px; }
.sort { margin-top: 11px; }
.sort .seg { width: 152px; padding-right: 0; }
</style>
